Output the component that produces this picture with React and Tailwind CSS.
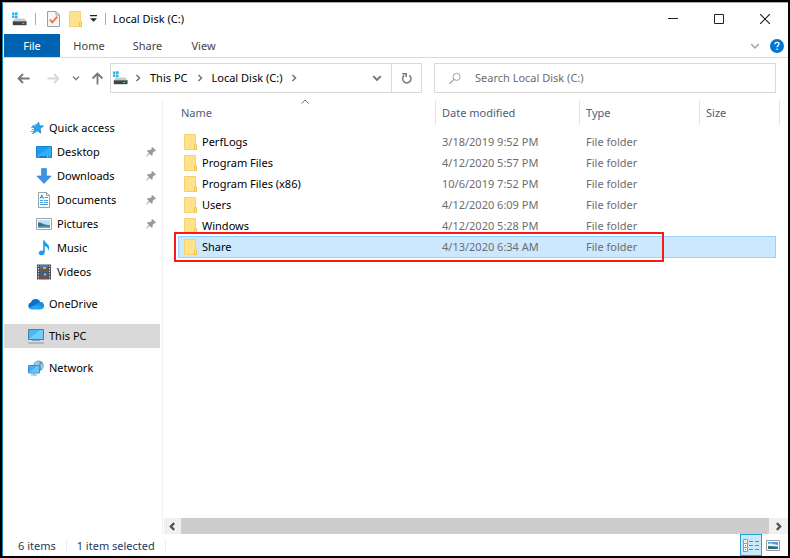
import React from "react";

const FONT = "font-['Noto_Sans','Open_Sans',sans-serif]";

function DriveIcon() {
  return (
    <svg width="16" height="16" viewBox="0 0 16 16" aria-hidden="true">
      <path d="M1 1.500h2.400v2.400H1zM4 1.200h2.600v2.700H4zM1 4.600h2.400V7H1zM4 4.600h2.600v2.700H4z" fill="#1fbcf2" />
      <path d="M3.800 7.500h9.700l2 3H1.800z" fill="#c9cbcc" />
      <path d="M1.800 10.300h13.700v3.900H1.800z" fill="#3f4244" />
      <path d="M1.800 10.300h13.700v.8H1.800z" fill="#707477" />
      <path d="M11 11.900h2.400v1H11z" fill="#3ce04a" />
    </svg>
  );
}

function FolderIcon() {
  return (
    <svg width="14" height="16" viewBox="0 0 14 16" aria-hidden="true">
      <path d="M.5.500h11v10.500h1v4.500H.5z" fill="#ffe28a" stroke="#f4d273" />
      <path d="M10.500 15.500v-4.300l1-1.200 1 1v4.500z" fill="#ffe694" stroke="#ecc34e" />
    </svg>
  );
}

function CheckDocIcon() {
  return (
    <svg width="13" height="16" viewBox="0 0 13 16" aria-hidden="true">
      <path d="M.5.500h8.500l3.500 3.500v11.500H.5z" fill="#f6f6f6" stroke="#a0a0a0" />
      <path d="M9 .5v3.500h3.500" fill="none" stroke="#a0a0a0" />
      <path d="M2.700 8.500l2.600 2.800 5-5.600" fill="none" stroke="#ee7340" strokeWidth="1.800" />
    </svg>
  );
}

function Chevron({ dir = "down", size = 8, color = "#777", weight = 1.6 }) {
  const paths = {
    down: "M1 2.500l3 3 3-3",
    up: "M.5 5.500L4 2l3.500 3.500",
    right: "M2.500 1l3 3-3 3",
    left: "M5.500 1l-3 3 3 3",
  };
  return (
    <svg width={size} height={size} viewBox="0 0 8 8" aria-hidden="true">
      <path d={paths[dir]} fill="none" stroke={color} strokeWidth={weight} />
    </svg>
  );
}

function Arrow({ dir, color }) {
  const paths = {
    left: "M12.500 6.500H1.500M6 2L1.500 6.500 6 11",
    right: "M.5 6.500h11M7 2l4.500 4.500L7 11",
    up: "M6.500 12.500V1.500M1.500 6.500l5-5 5 5",
  };
  return (
    <svg width="13" height="13" viewBox="0 0 13 13" aria-hidden="true">
      <path d={paths[dir]} fill="none" stroke={color} strokeWidth="1.800" />
    </svg>
  );
}

function PinIcon() {
  return (
    <svg width="10" height="10" viewBox="0 0 10 10" aria-hidden="true">
      <path d="M6.200 0L10 3.600 8.800 4.400 8.200 4.200 6.600 6 6.700 8.300 5.800 8.800 3.600 6.700.6 9.700.1 9.300 3 6 1 4l.7-1 2.400.2L5.800 1.700 5.500.8z" fill="#8f999f" />
    </svg>
  );
}

const sideIcons = {
  star: (
    <svg width="16" height="16" viewBox="0 0 16 16" aria-hidden="true">
      <path d="M10.600 2.200l.9 3.600 4 .3-3.300 2.500.5 4.600-3.300-2.400-4.400 2.700 1.900-4.500-2.600-2.600 3.700-.4z" fill="#2aa3ee" stroke="#1b86d4" strokeWidth=".8" />
      <path d="M6.500 4.500h2M4.500 5.500h2M3 7.500h2.500M3.500 9.500h2.500M2.500 11.500h3M4 13.500h1.500" stroke="#5bb6ef" fill="none" />
    </svg>
  ),
  desktop: (
    <svg width="16" height="16" viewBox="0 0 16 16" aria-hidden="true">
      <path d="M.5 2.500h15v11H.5z" fill="#1c9cf2" stroke="#1383d4" />
      <path d="M1 12L14 3h1v9z" fill="#34acf8" />
      <path d="M1 12.200h14v1H1z" fill="#1577bf" />
      <path d="M2 12.200h1v1H2zM11 12.200h1v1h-1zM13 12.200h1v1h-1z" fill="#bfe4ff" />
    </svg>
  ),
  download: (
    <svg width="16" height="16" viewBox="0 0 16 16" aria-hidden="true">
      <path d="M5.500.500h5v7.500h4.700L8 15.500.8 8h4.700z" fill="#3a95e4" stroke="#2b80cf" strokeWidth=".6" />
    </svg>
  ),
  document: (
    <svg width="16" height="16" viewBox="0 0 16 16" aria-hidden="true">
      <path d="M2.500.500h8l3 3v12h-11z" fill="#fcfcfc" stroke="#9aa2a6" />
      <path d="M10.500.500v3h3" fill="none" stroke="#9aa2a6" />
      <path d="M4.200 6.500l1.600-3.700 1.600 3.700M4.800 5.300h2" fill="none" stroke="#2c8fd6" />
      <path d="M8.500 5.500H12M4 8.500h3M8 8.500h4M4 10.500h3M8 10.500h4M4 12.500h8" stroke="#4aa0da" />
    </svg>
  ),
  picture: (
    <svg width="16" height="16" viewBox="0 0 16 16" aria-hidden="true">
      <path d="M.5 2.500h15v11H.5z" fill="#fff" stroke="#a0a4a7" />
      <path d="M2 4h12v8H2z" fill="#bfe1f7" />
      <path d="M2 6.500c3-.5 5 2 8 2.200l4 .6V12H2z" fill="#3f7186" />
      <path d="M2 10.300h12V12H2z" fill="#5ea2d4" />
    </svg>
  ),
  music: (
    <svg width="16" height="16" viewBox="0 0 16 16" aria-hidden="true">
      <path d="M7.200.500h1.600c.3 2.800 4.300 3.600 4.400 7 0 1.300-.6 2.400-1.200 3.200.5-2.600-.8-4.200-3.200-4.800v6.300c0 1.800-1.500 3.100-3.300 3.100-1.600 0-2.800-.9-2.800-2.200 0-1.500 1.500-2.700 3.200-2.700.5 0 .9.1 1.300.3z" fill="#189cf0" />
    </svg>
  ),
  video: (
    <svg width="16" height="16" viewBox="0 0 16 16" aria-hidden="true">
      <path d="M1 .5h14v15H1z" fill="#4a4b4e" />
      <path d="M4 1h8v6.500H4z" fill="#3f7dcb" />
      <path d="M4 8.300h8V15H4z" fill="#2d63ae" />
      <path d="M4 5l3-2 2 2 3-2v4.500H4z" fill="#6b5a48" />
      <path d="M7 3h3v2H7z" fill="#e6b03a" />
      <path d="M4 12l3-2 3 3 2-1v3H4z" fill="#7c4a48" />
      <path d="M8 9.500h2v2H8z" fill="#e2bb49" />
      <path d="M2.500 1.500v14M13.500 1.500v14" stroke="#dcdcdc" strokeWidth="1.200" strokeDasharray="1.300 1.300" />
    </svg>
  ),
  cloud: (
    <svg width="16" height="16" viewBox="0 0 16 16" aria-hidden="true">
      <path d="M3.600 13.200A3.500 3.500 0 0 1 3 6.300 5 5 0 0 1 12.200 6a3.800 3.800 0 0 1 3.600 4c0 2-1.500 3.200-3.200 3.200z" fill="#0f6fc9" />
      <path d="M1 11.800 9.500 8l6.200 3.300c-.5 1.300-1.600 1.900-3 1.900H3.600c-1.100 0-2-.5-2.600-1.400z" fill="#25a5ee" />
      <path d="M8.500 8.400C9.300 6.400 11 6 12.300 6a3.800 3.800 0 0 1 3.400 5.200z" fill="#1b8de0" />
    </svg>
  ),
  pc: (
    <svg width="16" height="16" viewBox="0 0 16 16" aria-hidden="true">
      <path d="M.5 1.500h15v10H.5z" fill="#4bb7f7" stroke="#4c7f9e" />
      <path d="M1 11L12 2h3v9z" fill="#70ccff" />
      <path d="M4 12.500h8" stroke="#8fa6b3" />
      <path d="M0 15h16" stroke="#8299a8" />
    </svg>
  ),
  network: (
    <svg width="16" height="16" viewBox="0 0 16 16" aria-hidden="true">
      <circle cx="10.500" cy="5.700" r="5.200" fill="#5a97bb" />
      <path d="M6.500 3c2-2.200 4-2 5.500-.8L11 5 6.500 5zM13 3l2.300 2c.3 2-.5 4-1.800 5L12.500 6z" fill="#9cc9dc" />
      <path d="M.5 5.500h11v7.500H.5z" fill="#3fadf3" stroke="#3990cc" />
      <path d="M1 12.500L8.500 6H11v6.500z" fill="#66c4fb" />
      <path d="M3 15h6M6 13v2" stroke="#8ba2b0" />
    </svg>
  ),
};

function SideItem({ icon, label, child, pinned, selected }) {
  return (
    <li>
      <a
        href="#"
        className={
          "mr-0.5 ml-px flex h-6 items-center gap-[5px] pr-1 " +
          (child ? "pl-8 " : "pl-6 ") +
          (selected ? "bg-[#d9d9d9]" : "")
        }
      >
        {sideIcons[icon]}
        <span className="flex-1">{label}</span>
        {pinned && <PinIcon />}
      </a>
    </li>
  );
}

function Sidebar() {
  return (
    <nav aria-label="Folders" className="w-40 shrink-0 border-r border-[#f1f1f1] pt-4 text-black">
      <ul>
        <SideItem icon="star" label="Quick access" />
        <SideItem icon="desktop" label="Desktop" child pinned />
        <SideItem icon="download" label="Downloads" child pinned />
        <SideItem icon="document" label="Documents" child pinned />
        <SideItem icon="picture" label="Pictures" child pinned />
        <SideItem icon="music" label="Music" child />
        <SideItem icon="video" label="Videos" child />
      </ul>
      <ul className="mt-2 flex flex-col gap-2">
        <SideItem icon="cloud" label="OneDrive" />
        <SideItem icon="pc" label="This PC" selected />
        <SideItem icon="network" label="Network" />
      </ul>
    </nav>
  );
}

const files = [
  ["PerfLogs", "3/18/2019 9:52 PM"],
  ["Program Files", "4/12/2020 5:57 PM"],
  ["Program Files (x86)", "10/6/2019 7:52 PM"],
  ["Users", "4/12/2020 6:09 PM"],
  ["Windows", "4/12/2020 5:28 PM"],
  ["Share", "4/13/2020 6:34 AM"],
];

function FileTable() {
  const th = "p-0 pb-1.5 text-left font-normal";
  const head = "flex h-[25px] items-center border-r border-[#e5e5e5]";
  return (
    <table className="w-full table-fixed border-separate border-spacing-0">
      <colgroup>
        <col className="w-[258px]" />
        <col className="w-36" />
        <col className="w-30" />
        <col />
        <col className="w-1" />
      </colgroup>
      <thead className="text-[#4c607a]">
        <tr>
          <th className={th + " relative"}>
            <div className={head + " pl-[3px]"}>Name</div>
            <span className="absolute top-0 left-1/2 -mt-0.5 -ml-1.5 leading-none">
              <Chevron dir="up" weight={1} />
            </span>
          </th>
          <th className={th}><div className={head + " pl-1.5"}>Date modified</div></th>
          <th className={th}><div className={head + " pl-1.5"}>Type</div></th>
          <th className={th} colSpan={2}><div className={head + " pl-1.5"}>Size</div></th>
        </tr>
      </thead>
      <tbody>
        {files.map(([name, date]) => {
          const on = name === "Share";
          const cell = on ? "h-[22px] p-0 border-y border-[#99d1ff] bg-[#cce8ff]" : "h-[21px] p-0";
          return (
            <tr key={name} aria-selected={on} className="text-[#6d6d6d]">
              <td className={cell + " relative text-black" + (on ? " border-l" : "")}>
                <div className={"flex items-center gap-1 " + (on ? "pl-[5px]" : "pl-1.5")}>
                  <FolderIcon />
                  <span>{name}</span>
                </div>
                {on && (
                  <span className="pointer-events-none absolute -top-[5px] -left-[5px] z-10 h-[30px] w-[490px] border-2 border-[#f81919]" />
                )}
              </td>
              <td className={cell}><div className="pl-1.5">{date}</div></td>
              <td className={cell}><div className="pl-1.5">File folder</div></td>
              <td className={cell + (on ? " border-r" : "")} />
              <td className="p-0" />
            </tr>
          );
        })}
      </tbody>
    </table>
  );
}

function TitleBar() {
  return (
    <header className="flex h-[31px] shrink-0 items-center justify-between pl-2">
      <div className="flex items-center">
        <DriveIcon />
        <span className="ml-2 h-3 w-px bg-[#aaa]" />
        <button type="button" aria-label="Properties" className="ml-[11px]"><CheckDocIcon /></button>
        <button type="button" aria-label="New folder" className="ml-[9px]"><FolderIcon /></button>
        <button type="button" aria-label="Customize toolbar" className="ml-[7px]">
          <svg width="7" height="7" viewBox="0 0 7 7" aria-hidden="true">
            <path d="M0 0h7v1.200H0zM0 3.200h7L3.500 6.700z" fill="#222" />
          </svg>
        </button>
        <span className="ml-2 h-3 w-px bg-[#aaa]" />
        <h1 className="ml-[7px] text-black">Local Disk (C:)</h1>
      </div>
      <div className="flex h-full text-[#222]">
        <button type="button" aria-label="Minimize" className="flex w-[46px] items-center justify-center">
          <svg width="10" height="10" viewBox="0 0 10 10" aria-hidden="true"><path d="M0 4.500h10" stroke="currentColor" /></svg>
        </button>
        <button type="button" aria-label="Maximize" className="flex w-[46px] items-center justify-center">
          <svg width="10" height="10" viewBox="0 0 10 10" aria-hidden="true"><path d="M.5.500h9v9h-9z" fill="none" stroke="currentColor" /></svg>
        </button>
        <button type="button" aria-label="Close" className="flex w-[46px] items-center justify-center">
          <svg width="10" height="10" viewBox="0 0 10 10" aria-hidden="true"><path d="M0 0l10 10M10 0L0 10" stroke="currentColor" strokeWidth="1.200" /></svg>
        </button>
      </div>
    </header>
  );
}

function Ribbon() {
  return (
    <div className="flex h-6 shrink-0 items-stretch border-b border-[#dadbdc] pr-1 text-[#444]">
      <button type="button" className="ml-px w-14 bg-[#0063b1] text-white">File</button>
      <button type="button" className="w-[58px]">Home</button>
      <button type="button" className="w-[59px]">Share</button>
      <button type="button" className="w-[53px]">View</button>
      <button type="button" aria-label="Expand ribbon" className="mr-2.5 ml-auto">
        <Chevron size={10} color="#aaa" weight={1.2} />
      </button>
      <button type="button" aria-label="Help">
        <svg width="14" height="14" viewBox="0 0 14 14" aria-hidden="true">
          <circle cx="7" cy="7" r="7" fill="#0077d7" />
          <path d="M5 5.200C5 3.900 5.900 3.300 7 3.300s2 .7 2 1.700c0 1.400-1.900 1.500-1.900 3.200M7.100 9.600v1.300" fill="none" stroke="#fff" strokeWidth="1.300" />
        </svg>
      </button>
    </div>
  );
}

function NavBar() {
  return (
    <div className="flex h-[42px] shrink-0 items-center pr-3 pb-0.5 pl-[14px]">
      <button type="button" aria-label="Back"><Arrow dir="left" color="#777" /></button>
      <button type="button" aria-label="Forward" className="ml-[17px]"><Arrow dir="right" color="#d8d8d8" /></button>
      <button type="button" aria-label="Recent locations" className="ml-3"><Chevron color="#8a8a8a" /></button>
      <button type="button" aria-label="Up" className="ml-[11px]"><Arrow dir="up" color="#777" /></button>
      <div className="ml-1.5 flex h-[30px] w-[312px] items-center border border-[#d9d9d9] pl-px text-black">
        <DriveIcon />
        <span className="ml-1.5"><Chevron dir="right" /></span>
        <a href="#" className="ml-2">This PC</a>
        <span className="ml-2"><Chevron dir="right" /></span>
        <a href="#" className="ml-2">Local Disk (C:)</a>
        <span className="ml-2"><Chevron dir="right" /></span>
        <button type="button" aria-label="Previous locations" className="mr-[9px] ml-auto">
          <Chevron size={10} />
        </button>
        <button type="button" aria-label="Refresh" className="flex h-full w-[30px] items-center justify-center border-l border-[#d9d9d9]">
          <svg width="12" height="12" viewBox="0 0 12 12" aria-hidden="true">
            <path d="M8.200 3.300A4.200 4.200 0 1 1 3.200 3.400M1.300 1.700h3.900v3.300" fill="none" stroke="#777" strokeWidth="1.500" />
          </svg>
        </button>
      </div>
      <label className="ml-3 flex h-[30px] flex-1 items-center border border-[#d9d9d9] pl-[14px]">
        <svg width="13" height="13" viewBox="0 0 13 13" aria-hidden="true">
          <circle cx="8.200" cy="4.700" r="3.900" fill="none" stroke="#999" />
          <path d="M5.400 7.500L.5 12.400" stroke="#999" strokeWidth="1.200" />
        </svg>
        <input
          type="text"
          aria-label="Search Local Disk (C:)"
          placeholder="Search Local Disk (C:)"
          className="ml-[14px] w-full outline-none placeholder:text-[#6d6d6d]"
        />
      </label>
    </div>
  );
}

function HorizontalScrollbar() {
  return (
    <div className="flex h-4 shrink-0 items-stretch bg-[#f0f0f0]">
      <button type="button" aria-label="Scroll left" className="flex w-[17px] items-center justify-center">
        <Chevron dir="left" size={9} color="#505050" weight={2} />
      </button>
      <div className="flex-1 bg-[#cdcdcd]" />
      <button type="button" aria-label="Scroll right" className="flex w-[19px] items-center justify-center">
        <Chevron dir="right" size={9} color="#505050" weight={2} />
      </button>
    </div>
  );
}

function StatusBar() {
  return (
    <footer className="flex h-[22px] shrink-0 items-stretch pr-2 pl-[15px] text-[#1e395b]">
      <div className="flex flex-1 items-center pt-0.5">
        <span>6 items</span>
        <span className="ml-2.5 h-3 w-px bg-[#eee]" />
        <span className="ml-2.5">1 item selected</span>
        <span className="ml-2.5 h-3 w-px bg-[#eee]" />
      </div>
      <button type="button" aria-label="Details view" className="flex w-[22px] items-center justify-center border border-[#26a0da] bg-[#cbe8f6]">
        <svg width="16" height="13" viewBox="0 0 16 13" aria-hidden="true">
          <path d="M.5.500h4v12h-4zM.5 4.500h4M.5 8.500h4" fill="#fff" stroke="#9a9a9a" />
          <path d="M2 2h1v1H2z" fill="#999" /><path d="M2 6h1v1H2z" fill="#3578c9" /><path d="M2 10h1v1H2z" fill="#d05a3a" />
          <path d="M6 2.500h4M12 2.500h4M6 6.500h4M12 6.500h4M6 10.500h4M12 10.500h4" stroke="#7c8488" />
        </svg>
      </button>
      <button type="button" aria-label="Large icons view" className="ml-1">
        <svg width="14" height="11" viewBox="0 0 14 11" aria-hidden="true">
          <path d="M.5.500h13v10H.5z" fill="#fff" stroke="#999" />
          <path d="M2 2h10v7H2z" fill="#4d9be0" />
          <path d="M2 4c3-1 5 0 10 1v1.500L2 6z" fill="#e1f1fb" />
          <path d="M2 6c3-.5 7 1.500 10 .8V9H2z" fill="#356a80" />
        </svg>
      </button>
    </footer>
  );
}

export default function App() {
  return (
    <div className={"h-screen border-2 border-black bg-white text-[11px] leading-4 " + FONT}>
      <div className="flex h-full flex-col border-t border-l border-t-[#aaa] border-l-[#1883b7]">
        <TitleBar />
        <Ribbon />
        <NavBar />
        <div className="flex min-h-0 flex-1">
          <Sidebar />
          <main className="flex min-w-0 flex-1 flex-col pl-px">
            <div className="flex-1 pr-2 pl-[14px]">
              <FileTable />
            </div>
            <HorizontalScrollbar />
          </main>
        </div>
        <StatusBar />
      </div>
    </div>
  );
}
